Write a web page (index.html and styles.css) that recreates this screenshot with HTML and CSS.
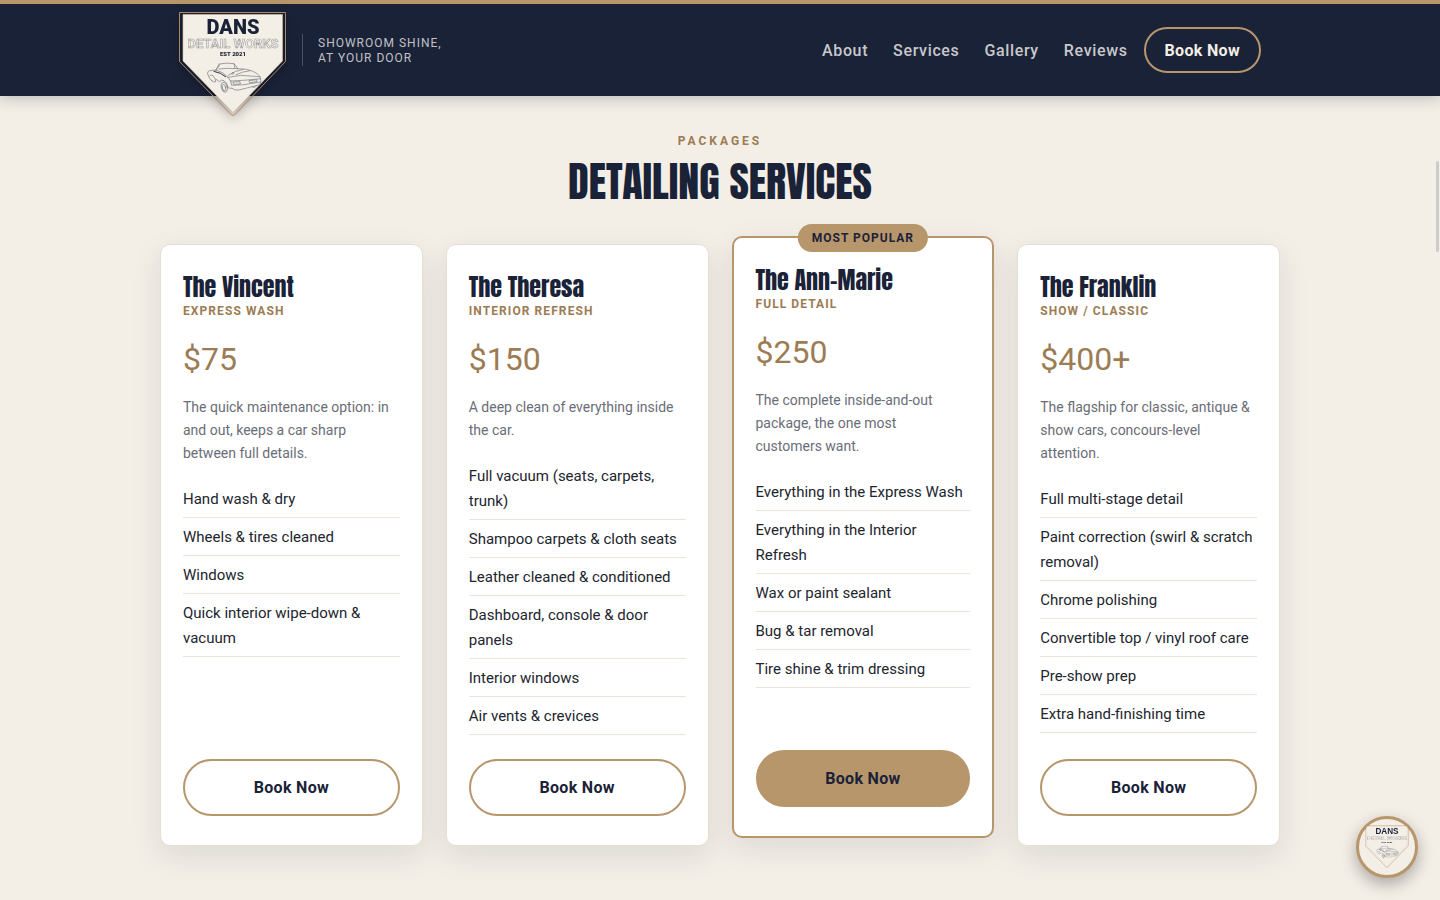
FILE: index.html
```html
<!DOCTYPE html>
<html lang="en">
<head>
    <meta charset="UTF-8">
    <meta name="viewport" content="width=device-width, initial-scale=1.0">
    <title>Dans Detail Works</title>
    <link rel="stylesheet" href="styles.css">
</head>
<body>
    <header class="header">
        <div class="header-inner">
            <a class="brand" href="#" aria-label="Dans Detail Works">
                <svg class="brand-logo" viewBox="0 0 108 106">
                    <g id="logo">
                        <path d="M.5 .5H106.500V49.500L57 101.500Q54 105 51 101.500L.5 49.500Z" fill="none" stroke="#a88a68"/>
                        <path d="M4 2.500H103.500V49L54 100.500L4 49Z" fill="#f3eee6" stroke="#d9c1a5" stroke-width=".6"/>
                        <text class="logo-name" x="54" y="22" text-anchor="middle">DANS</text>
                        <text class="logo-works" x="54" y="36" text-anchor="middle">DETAIL WORKS</text>
                        <text class="logo-est" x="54" y="44" text-anchor="middle">EST 2021</text>
                        <!-- car -->
                        <g transform="translate(27.700 50.700) scale(.333)" fill="none" stroke="#73777f" stroke-width="2" stroke-linejoin="round" stroke-linecap="round">
                            <path d="M28 22L37 4Q60 -1 82 3Q88 8 93 18"/>
                            <path d="M28 22Q34 16 39 6M37 19Q60 15 93 18M82 3L85 17"/>
                            <path d="M28 22L8 24Q1 26 3 34L8 46L16 55"/>
                            <path d="M93 18Q118 17 137 25Q153 31 160 42L163 55Q162 63 157 67L96 82Q82 84 76 77"/>
                            <path d="M28 22Q50 27 64 44L72 55M64 44L102 38L160 42"/>
                            <path d="M22 26Q42 29 57 42" stroke="#30374a" stroke-width="3"/>
                            <path d="M64 38Q84 24 110 20M88 36Q108 26 130 24"/>
                            <path d="M72 55L110 53L162 48M72 55L75 68L112 66L162 58"/>
                            <path d="M80 58L100 57L101 64L82 65ZM128 54L150 51L151 57L130 60Z"/>
                            <path d="M28 50L39 57Q43 50 52 54Q61 60 65 76L76 77"/>
                            <ellipse cx="53" cy="74" rx="9" ry="15" transform="rotate(-14 53 74)"/>
                            <ellipse cx="52" cy="75" rx="5" ry="10" transform="rotate(-14 52 75)"/>
                            <path d="M9 40Q12 33 19 39Q27 47 27 57Q21 61 14 53"/>
                            <path d="M137 72Q142 79 149 69M75 32L79 29L83 31L80 34Z"/>
                        </g>
                    </g>
                </svg>
                <span class="tagline">Showroom shine,<br>at your door</span>
            </a>
            <nav class="nav">
                <a href="#about">About</a>
                <a href="#services">Services</a>
                <a href="#gallery">Gallery</a>
                <a href="#reviews">Reviews</a>
                <a class="nav-book" href="#book">Book Now</a>
            </nav>
        </div>
    </header>

    <main class="services" id="services">
        <p class="eyebrow">Packages</p>
        <h2 class="section-title">Detailing Services</h2>

        <div class="cards">
            <article class="card">
                <h3>The Vincent</h3>
                <p class="card-type">Express Wash</p>
                <p class="price">$75</p>
                <p class="desc">The quick maintenance option: in and out, keeps a car sharp between full details.</p>
                <ul>
                    <li>Hand wash &amp; dry</li>
                    <li>Wheels &amp; tires cleaned</li>
                    <li>Windows</li>
                    <li>Quick interior wipe-down &amp; vacuum</li>
                </ul>
                <a class="btn" href="#book">Book Now</a>
            </article>

            <article class="card">
                <h3>The Theresa</h3>
                <p class="card-type">Interior Refresh</p>
                <p class="price">$150</p>
                <p class="desc">A deep clean of everything inside the car.</p>
                <ul>
                    <li>Full vacuum (seats, carpets, trunk)</li>
                    <li>Shampoo carpets &amp; cloth seats</li>
                    <li>Leather cleaned &amp; conditioned</li>
                    <li>Dashboard, console &amp; door panels</li>
                    <li>Interior windows</li>
                    <li>Air vents &amp; crevices</li>
                </ul>
                <a class="btn" href="#book">Book Now</a>
            </article>

            <article class="card featured">
                <span class="badge">Most Popular</span>
                <h3>The Ann-Marie</h3>
                <p class="card-type">Full Detail</p>
                <p class="price">$250</p>
                <p class="desc">The complete inside-and-out package, the one most <br>customers want.</p>
                <ul>
                    <li>Everything in the Express Wash</li>
                    <li>Everything in the Interior Refresh</li>
                    <li>Wax or paint sealant</li>
                    <li>Bug &amp; tar removal</li>
                    <li>Tire shine &amp; trim dressing</li>
                </ul>
                <a class="btn" href="#book">Book Now</a>
            </article>

            <article class="card">
                <h3>The Franklin</h3>
                <p class="card-type">Show / Classic</p>
                <p class="price">$400+</p>
                <p class="desc">The flagship for classic, antique &amp; show cars, concours-level attention.</p>
                <ul>
                    <li>Full multi-stage detail</li>
                    <li>Paint correction (swirl &amp; scratch removal)</li>
                    <li>Chrome polishing</li>
                    <li>Convertible top / vinyl roof care</li>
                    <li>Pre-show prep</li>
                    <li>Extra hand-finishing time</li>
                </ul>
                <a class="btn" href="#book">Book Now</a>
            </article>
        </div>
    </main>

    <button class="float-logo" type="button" aria-label="Open chat">
        <svg viewBox="0 0 108 106"><use href="#logo"/></svg>
    </button>
    <div class="scroll-thumb" aria-hidden="true"></div>
</body>
</html>
```
FILE: styles.css
```css
:root {
    --navy: #1a2238;
    --gold: #b8966c;
    --bronze: #9c7c54;
    --cream: #f3eee6;
    --line: #ece4d6;
}

* {
    margin: 0;
    padding: 0;
    box-sizing: border-box;
}

body {
    font-family: Roboto, "Liberation Sans", sans-serif;
    font-size: 16px;
    background-color: var(--cream);
    color: #22252e;
}

a {
    text-decoration: none;
}

/* logo */
.logo-name {
    font-size: 20px;
    font-weight: 900;
    fill: var(--navy);
}

.logo-works {
    font-size: 13px;
    font-weight: 700;
    fill: #f3eee6;
    stroke: #a3a3a5;
    stroke-width: 0.6px;
}

.logo-est {
    font-size: 6px;
    font-weight: 900;
    fill: var(--navy);
}

/* header */
.header {
    position: relative;
    z-index: 2;
    background-color: var(--navy);
    border-top: 4px solid var(--gold);
    box-shadow: 0 2px 14px rgba(26, 34, 56, 0.25);
}

.header-inner {
    max-width: 1120px;
    height: 92px;
    margin: 0 auto;
    padding: 0 19px;
    display: flex;
    justify-content: space-between;
    align-items: center;
}

.brand {
    align-self: flex-start;
    height: 92px;
    display: flex;
    align-items: center;
    gap: 15px;
}

.brand-logo {
    align-self: flex-start;
    flex: none;
    width: 108px;
    height: 106px;
    margin-top: 8px;
    filter: drop-shadow(0 4px 6px rgba(0, 0, 0, 0.3));
}

.tagline {
    border-left: 1px solid #4a5060;
    padding: 2px 0 0 15px;
    font-size: 12px;
    line-height: 15px;
    letter-spacing: 1px;
    text-transform: uppercase;
    color: #c0c1c4;
}

.nav {
    display: flex;
    align-items: center;
    gap: 25px;
}

.nav a {
    font-weight: 500;
    letter-spacing: 0.04em;
    color: #c8c8ca;
}

.nav .nav-book {
    margin-left: -9px;
    padding: 1px 19px 0;
    line-height: 41px;
    border: 2px solid var(--gold);
    border-radius: 999px;
    font-weight: 700;
    letter-spacing: 0.02em;
    color: var(--cream);
}

/* services */
.services {
    max-width: 1168px;
    margin: 0 auto;
    padding: 36px 24px 54px;
}

.eyebrow {
    text-align: center;
    font-size: 12px;
    line-height: 18px;
    font-weight: 700;
    letter-spacing: 3px;
    text-transform: uppercase;
    color: var(--bronze);
}

.section-title {
    margin: 5px 0 36px;
    text-align: center;
    font-family: Anton, "Liberation Sans Narrow", "Liberation Sans", sans-serif;
    font-size: 42px;
    font-weight: 400;
    line-height: 53px;
    text-transform: uppercase;
    color: var(--navy);
}

.cards {
    display: grid;
    grid-template-columns: repeat(4, 1fr);
    gap: 23px;
}

.card {
    display: flex;
    flex-direction: column;
    padding: 28px 22px 29px;
    background-color: #fff;
    border: 1px solid #e6dfd0;
    border-radius: 10px;
    box-shadow: 0 10px 30px rgba(26, 34, 56, 0.1);
}

.card h3 {
    font-family: Anton, "Liberation Sans Narrow", "Liberation Sans", sans-serif;
    font-size: 24px;
    font-weight: 400;
    line-height: 28px;
    color: var(--navy);
}

.card-type {
    font-size: 12px;
    line-height: 20px;
    font-weight: 700;
    letter-spacing: 0.09em;
    text-transform: uppercase;
    color: var(--bronze);
}

.price {
    margin: 19px 0 17px;
    font-size: 32px;
    line-height: 39px;
    color: var(--bronze);
}

.desc {
    font-size: 14px;
    line-height: 23px;
    color: #6a6d77;
}

.card ul {
    list-style: none;
    margin: 15px 0 24px;
}

.card li {
    padding: 7px 0 5px;
    font-size: 15px;
    line-height: 25px;
    border-bottom: 1px solid var(--line);
}

.btn {
    margin-top: auto;
    border: 2px solid var(--gold);
    border-radius: 999px;
    font-weight: 700;
    line-height: 53px;
    letter-spacing: 0.02em;
    text-align: center;
    color: var(--navy);
}

.featured {
    position: relative;
    border: 2px solid var(--gold);
    transform: translateY(-8px);
}

.featured .btn {
    background-color: var(--gold);
}

.badge {
    position: absolute;
    top: -14px;
    left: 50%;
    transform: translateX(-50%);
    padding: 0 14px;
    background-color: var(--gold);
    border-radius: 999px;
    font-size: 12px;
    font-weight: 700;
    line-height: 28px;
    letter-spacing: 1px;
    text-transform: uppercase;
    white-space: nowrap;
    color: var(--navy);
}

/* floating logo button */
.float-logo {
    position: fixed;
    right: 22px;
    bottom: 22px;
    z-index: 3;
    width: 62px;
    height: 62px;
    display: flex;
    justify-content: center;
    align-items: center;
    background-color: var(--cream);
    border: 3px solid var(--gold);
    border-radius: 50%;
    box-shadow: 0 6px 16px rgba(0, 0, 0, 0.3);
    cursor: pointer;
}

.float-logo svg {
    flex: none;
    width: 44px;
    height: 44px;
}

.scroll-thumb {
    position: fixed;
    top: 161px;
    right: 1px;
    width: 3px;
    height: 91px;
    border-radius: 2px;
    background-color: #cecccb;
}
```
